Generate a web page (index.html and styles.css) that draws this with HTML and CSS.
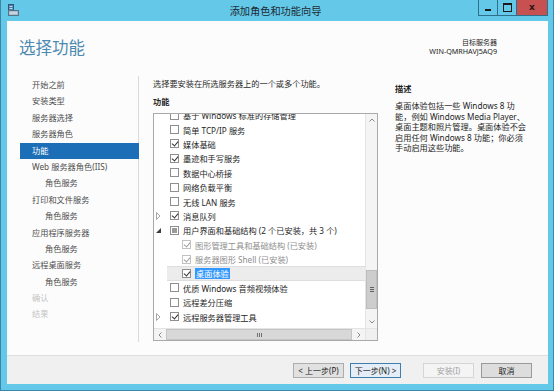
FILE: index.html
```html
<!DOCTYPE html>
<html lang="zh-CN">
<head>
    <meta charset="UTF-8">
    <title>添加角色和功能向导</title>
    <link rel="stylesheet" href="styles.css">
</head>
<body>
    <div class="window">
        <div class="titlebar">
            <svg class="app-icon" width="11" height="12" viewBox="0 0 11 12">
                <rect x="0.5" y="0.5" width="5" height="6" fill="#4f7fa8" stroke="#2f5677"/>
                <line x1="1.5" y1="2.5" x2="4.5" y2="2.5" stroke="#bcd6ea"/>
                <line x1="1.5" y1="4.5" x2="4.5" y2="4.5" stroke="#bcd6ea"/>
                <rect x="0.5" y="6.5" width="10" height="5" fill="#a9bccb" stroke="#55738c"/>
                <line x1="2" y1="9" x2="9" y2="9" stroke="#e6eef4"/>
            </svg>
            <div class="title">添加角色和功能向导</div>
            <div class="controls">
                <span class="ctl ctl-min"></span>
                <span class="ctl ctl-max"></span>
                <span class="ctl ctl-close">x</span>
            </div>
        </div>

        <div class="client">
            <div class="header">
                <h1>选择功能</h1>
                <div class="target">
                    <div class="target-label">目标服务器</div>
                    <div class="target-name">WIN-QMRHAVJ5AQ9</div>
                </div>
            </div>

            <div class="body">
                <ul class="nav">
                    <li>开始之前</li>
                    <li>安装类型</li>
                    <li>服务器选择</li>
                    <li>服务器角色</li>
                    <li class="active">功能</li>
                    <li>Web 服务器角色(IIS)</li>
                    <li class="sub">角色服务</li>
                    <li>打印和文件服务</li>
                    <li class="sub">角色服务</li>
                    <li>应用程序服务器</li>
                    <li class="sub">角色服务</li>
                    <li>远程桌面服务</li>
                    <li class="sub">角色服务</li>
                    <li class="disabled">确认</li>
                    <li class="disabled">结果</li>
                </ul>

                <div class="main">
                    <div class="features">
                        <p class="intro">选择要安装在所选服务器上的一个或多个功能。</p>
                        <h2>功能</h2>
                        <div class="listbox">
                            <div class="list-area">
                                <div class="rows-view">
                                    <div class="rows">
                                        <div class="row"><span class="exp"></span><span class="item"><span class="cb"></span>基于 Windows 标准的存储管理</span></div>
                                        <div class="row"><span class="exp"></span><span class="item"><span class="cb"></span>简单 TCP/IP 服务</span></div>
                                        <div class="row"><span class="exp"></span><span class="item"><span class="cb on"></span>媒体基础</span></div>
                                        <div class="row"><span class="exp"></span><span class="item"><span class="cb on"></span>墨迹和手写服务</span></div>
                                        <div class="row"><span class="exp"></span><span class="item"><span class="cb"></span>数据中心桥接</span></div>
                                        <div class="row"><span class="exp"></span><span class="item"><span class="cb"></span>网络负载平衡</span></div>
                                        <div class="row"><span class="exp"></span><span class="item"><span class="cb"></span>无线 LAN 服务</span></div>
                                        <div class="row">
                                            <span class="exp"><svg width="5" height="8" viewBox="0 0 5 8"><path d="M0.5 0.5 L4 4 L0.5 7.5 Z" fill="none" stroke="#a6a6a6"/></svg></span>
                                            <span class="item"><span class="cb on"></span>消息队列</span>
                                        </div>
                                        <div class="row">
                                            <span class="exp"><svg width="5" height="5" viewBox="0 0 5 5"><path d="M5 0 L5 5 L0 5 Z" fill="#3c3c3c"/></svg></span>
                                            <span class="item"><span class="cb part"></span>用户界面和基础结构 (2 个已安装，共 3 个)</span>
                                        </div>
                                        <div class="row"><span class="exp"></span><span class="item child off"><span class="cb on"></span>图形管理工具和基础结构 (已安装)</span></div>
                                        <div class="row"><span class="exp"></span><span class="item child off"><span class="cb on"></span>服务器图形 Shell (已安装)</span></div>
                                        <div class="row"><span class="exp"></span><span class="item child selected"><span class="cb on"></span><span class="hl">桌面体验</span></span></div>
                                        <div class="row"><span class="exp"></span><span class="item"><span class="cb"></span>优质 Windows 音频视频体验</span></div>
                                        <div class="row"><span class="exp"></span><span class="item"><span class="cb"></span>远程差分压缩</span></div>
                                        <div class="row">
                                            <span class="exp"><svg width="5" height="8" viewBox="0 0 5 8"><path d="M0.5 0.5 L4 4 L0.5 7.5 Z" fill="none" stroke="#a6a6a6"/></svg></span>
                                            <span class="item"><span class="cb on"></span>远程服务器管理工具</span>
                                        </div>
                                    </div>
                                </div>
                                <div class="vscroll">
                                    <span class="sb-btn"><svg width="6" height="4" viewBox="0 0 6 4"><path d="M0.5 3.5 L3 1 L5.5 3.5" fill="none" stroke="#8a8a8a"/></svg></span>
                                    <span class="vthumb"><i></i><i></i><i></i></span>
                                    <span class="sb-fill"></span>
                                    <span class="sb-btn"><svg width="6" height="4" viewBox="0 0 6 4"><path d="M0.5 0.5 L3 3 L5.5 0.5" fill="none" stroke="#8a8a8a"/></svg></span>
                                </div>
                            </div>
                            <div class="hscroll">
                                <span class="sb-btn"><svg width="4" height="6" viewBox="0 0 4 6"><path d="M3.5 0.5 L1 3 L3.5 5.5" fill="none" stroke="#8a8a8a"/></svg></span>
                                <span class="hthumb"><i></i><i></i><i></i></span>
                                <span class="sb-btn"><svg width="4" height="6" viewBox="0 0 4 6"><path d="M0.5 0.5 L3 3 L0.5 5.5" fill="none" stroke="#8a8a8a"/></svg></span>
                                <span class="sb-corner"></span>
                            </div>
                        </div>
                    </div>

                    <div class="desc">
                        <h2>描述</h2>
                        <p>桌面体验包括一些 Windows 8 功<br>能，例如 Windows Media Player、<br>桌面主题和照片管理。桌面体验不会<br>启用任何 Windows 8 功能；你必须<br>手动启用这些功能。</p>
                    </div>
                </div>
            </div>

            <div class="footer">
                <button class="btn">&lt; 上一步(P)</button>
                <button class="btn btn-default">下一步(N) &gt;</button>
                <button class="btn btn-install" disabled>安装(I)</button>
                <button class="btn btn-cancel">取消</button>
            </div>
        </div>
    </div>
</body>
</html>
```

FILE: styles.css
```css
* {
    box-sizing: border-box;
}
body {
    margin: 0;
    font-family: "Noto Sans", "Noto Sans CJK SC", sans-serif;
    font-size: 8.2px;
    color: #2a2a2a;
    background: #64c8e8;
}
.window {
    width: 554px;
    height: 391px;
    display: flex;
    flex-direction: column;
    background: #64c8e8;
    border: 1px solid #3a86a6;
    border-top: none;
}

/* title bar */
.titlebar {
    height: 21px;
    display: flex;
    align-items: flex-start;
    flex: none;
}
.app-icon {
    margin: 4px 0 0 7px;
}
.title {
    flex: 1;
    text-align: center;
    font-size: 10.2px;
    line-height: 19px;
    padding: 2px 0 0 54px;
    color: #1d2a33;
}
.controls {
    display: flex;
    margin-right: 5px;
    height: 16px;
    border: 1px solid #2d6f8c;
    border-top: none;
}
.ctl {
    display: flex;
    align-items: center;
    justify-content: center;
    width: 19px;
}
.ctl-min {
    border-right: 1px solid #2d6f8c;
}
.ctl-min::after {
    content: "";
    width: 6px;
    height: 2px;
    margin-top: 5px;
    background: #1b1b1b;
}
.ctl-max {
    border-right: 1px solid #2d6f8c;
}
.ctl-max::after {
    content: "";
    width: 7px;
    height: 6px;
    border: 1px solid #1b1b1b;
    border-top-width: 2px;
}
.ctl-close {
    width: 30px;
    background: #c75050;
    color: #2b1515;
    font-family: "DejaVu Sans", sans-serif;
    font-size: 9px;
    font-weight: bold;
    line-height: 15px;
}

/* client area */
.client {
    flex: 1;
    margin: 0 5px 6px 6px;
    background: #fcfcfc;
    display: flex;
    flex-direction: column;
}
.header {
    height: 55px;
    flex: none;
    display: flex;
    justify-content: space-between;
    align-items: flex-start;
}
.header h1 {
    margin: 0;
    padding: 17px 0 0 12px;
    font-size: 16.5px;
    line-height: 20px;
    font-weight: normal;
    color: #4d8ab1;
}
.target {
    margin-right: 51px;
    padding-top: 18px;
    text-align: right;
    color: #222;
}
.target-label {
    font-size: 7px;
    line-height: 8px;
}
.target-name {
    font-size: 7.2px;
    line-height: 8px;
}

.body {
    height: 279px;
    flex: none;
    display: flex;
}

/* step navigation */
.nav {
    list-style: none;
    margin: 0;
    padding: 1px 0 0 13px;
    width: 132px;
    height: 266px;
    border-right: 1px solid #dadada;
    flex: none;
}
.nav li {
    height: 16.4px;
    line-height: 16.4px;
    padding-left: 12px;
    color: #4f4f4f;
    margin-right: -1px;
}
.nav li.sub {
    padding-left: 25px;
}
.nav li.active {
    background: #1c6fb6;
    color: #fff;
}
.nav li.disabled {
    color: #c4c4c4;
}

.main {
    flex: 1;
    display: flex;
    padding-left: 14px;
}
.features {
    width: 225px;
    flex: none;
}
.intro {
    margin: 0;
    padding-top: 3px;
    line-height: 10px;
}
.main h2 {
    margin: 8px 0 0;
    font-size: 8.2px;
    line-height: 10px;
    font-weight: bold;
    color: #1e1e1e;
}

/* feature tree */
.listbox {
    margin-top: 6px;
    width: 225px;
    height: 228px;
    border: 1px solid #a9a9a9;
    background: #fff;
    display: flex;
    flex-direction: column;
}
.list-area {
    flex: 1;
    display: flex;
    min-height: 0;
}
.rows-view {
    flex: 1;
    overflow: hidden;
}
.rows {
    margin-top: -6px;
}
.row {
    height: 14.4px;
    display: flex;
    align-items: center;
    color: #1e1e1e;
    white-space: nowrap;
}
.exp {
    width: 13px;
    flex: none;
    padding-left: 2px;
    display: flex;
    align-items: center;
}
.item {
    flex: 1;
    height: 100%;
    display: flex;
    align-items: center;
    padding-left: 3px;
}
.item.child {
    padding-left: 15px;
}
.item.off {
    color: #8e8e8e;
}
.item.selected {
    background: #ececec;
    border-top: 1px solid #dedede;
    border-bottom: 1px solid #dedede;
}
.hl {
    background: #3399ff;
    color: #fff;
    padding: 0 1px;
    line-height: 11px;
}
.cb {
    position: relative;
    width: 9px;
    height: 9px;
    flex: none;
    margin-right: 4px;
    border: 1px solid #8f8f8f;
    background: #fff;
}
.cb.on::after {
    content: "";
    position: absolute;
    left: 2px;
    top: 0;
    width: 3px;
    height: 5px;
    border: solid #333;
    border-width: 0 1.3px 1.3px 0;
    transform: rotate(40deg);
}
.off .cb {
    border-color: #c2c2c2;
}
.off .cb.on::after {
    border-color: #a0a0a0;
}
.cb.part::after {
    content: "";
    position: absolute;
    left: 1px;
    top: 1px;
    width: 5px;
    height: 5px;
    background: #9a9a9a;
}

/* scroll bars */
.vscroll {
    width: 12px;
    flex: none;
    display: flex;
    flex-direction: column;
    background: #f4f4f4;
    border-left: 1px solid #e4e4e4;
}
.sb-btn {
    width: 12px;
    height: 12px;
    flex: none;
    display: flex;
    align-items: center;
    justify-content: center;
}
.vscroll .sb-btn {
    width: 11px;
}
.vthumb {
    margin-top: 144px;
    height: 39px;
    flex: none;
    background: #cdcdcd;
    border: 1px solid #bdbdbd;
    display: flex;
    flex-direction: column;
    align-items: center;
    justify-content: center;
    gap: 1px;
}
.vthumb i {
    width: 4px;
    height: 1px;
    background: #606060;
}
.sb-fill {
    flex: 1;
}
.hscroll {
    height: 12px;
    flex: none;
    display: flex;
    background: #f4f4f4;
    border-top: 1px solid #e4e4e4;
}
.hscroll .sb-btn {
    height: 11px;
}
.hthumb {
    width: 186px;
    margin-right: 1px;
    flex: none;
    background: #d8d8d8;
    border: 1px solid #c4c4c4;
    display: flex;
    align-items: center;
    justify-content: center;
    gap: 1px;
}
.hthumb i {
    width: 1px;
    height: 4px;
    background: #707070;
}
.sb-corner {
    flex: 1;
    background: #f0f0f0;
    border-left: 1px solid #e4e4e4;
}

/* description */
.desc {
    margin-left: 17px;
}
.desc p {
    margin: 7px 0 0;
    line-height: 10.6px;
    color: #1e1e1e;
}

/* buttons */
.footer {
    flex: 1;
    display: flex;
    justify-content: flex-end;
    align-items: flex-start;
    padding: 7px 16px 0 0;
    background: #f0f0f0;
    border-top: 1px solid #dfdfdf;
}
.btn {
    width: 51px;
    height: 15px;
    padding: 0;
    font-family: "Noto Sans", "Noto Sans CJK SC", sans-serif;
    font-size: 8px;
    line-height: 13px;
    color: #222;
    background: #e1e1e1;
    border: 1px solid #adadad;
    border-radius: 0;
}
.btn-default {
    margin-left: 6px;
    border-color: #3c7fb1;
    background: #e5eef6;
}
.btn-install {
    margin-left: 22px;
    color: #a3a3a3;
    background: #f4f4f4;
    border-color: #d5d5d5;
}
.btn-cancel {
    margin-left: 7px;
    background: #dddddd;
    border-color: #9a9a9a;
}
```
